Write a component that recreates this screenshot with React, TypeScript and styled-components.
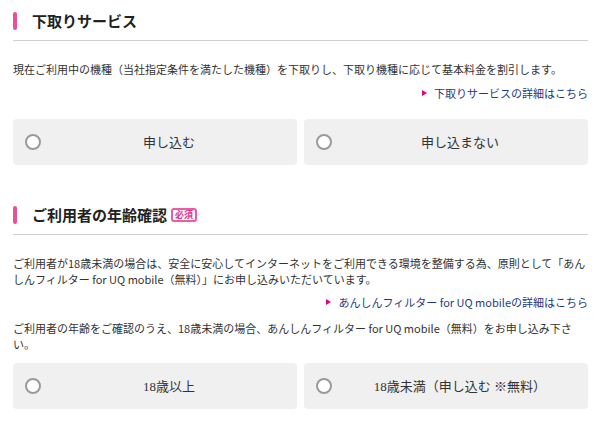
import React from 'react'
import styled, { createGlobalStyle } from 'styled-components'

const GlobalStyle = createGlobalStyle`
  html, body {
    margin: 0;
    padding: 0;
    background: #fff;
  }
  body {
    font-family: "Noto Sans CJK JP", "Noto Sans", sans-serif;
    color: #333;
  }
`

const Page = styled.div`
  width: 575px;
  padding: 12px 12px 0 13px;
`

const Section = styled.section<{ $gap?: number }>`
  margin-bottom: ${(p) => p.$gap ?? 0}px;
`

const Heading = styled.h2`
  display: flex;
  align-items: center;
  margin: 0;
  padding-bottom: 10px;
  border-bottom: 1px solid #cfcfcf;
  font-size: 15px;
  line-height: 18px;
  font-weight: 700;
  color: #222;
`

const Bar = styled.span`
  width: 4px;
  height: 18px;
  border-radius: 2px;
  background: #ec4f97;
  margin-right: 15px;
`

const Badge = styled.span`
  display: inline-flex;
  align-items: center;
  justify-content: center;
  width: 22px;
  height: 10px;
  margin-left: 4px;
  border: 2px solid #ec5c9f;
  border-radius: 3px;
  color: #e6338a;
  font-size: 9px;
  line-height: 1;
  font-weight: 700;
`

const Text = styled.p<{ $top: number }>`
  margin: ${(p) => p.$top}px 0 0;
  font-size: 11px;
  line-height: 16.5px;
  color: #333;
`

const LinkRow = styled.div<{ $top: number }>`
  display: flex;
  justify-content: flex-end;
  align-items: center;
  margin-top: ${(p) => p.$top}px;
  font-size: 11px;
  line-height: 17px;
`

const Link = styled.a`
  display: flex;
  align-items: center;
  color: #1e3a80;
  text-decoration: none;
`

const Arrow = styled.span`
  width: 0;
  height: 0;
  border-top: 3.5px solid transparent;
  border-bottom: 3.5px solid transparent;
  border-left: 5px solid #e4007f;
  margin-right: 7px;
`

const Choices = styled.div<{ $top: number }>`
  display: grid;
  grid-template-columns: 1fr 1fr;
  gap: 7px;
  margin-top: ${(p) => p.$top}px;
`

const Choice = styled.label`
  position: relative;
  display: flex;
  align-items: center;
  justify-content: center;
  height: 46px;
  padding-left: 28px;
  border-radius: 4px;
  background: #f0f0f0;
  cursor: pointer;
  font-family: "Liberation Serif", "Noto Sans CJK JP", serif;
  font-size: 13px;
  color: #333;
`

const Radio = styled.span`
  position: absolute;
  left: 12px;
  top: 50%;
  width: 12px;
  height: 12px;
  margin-top: -8px;
  border: 2px solid #9a9a9a;
  border-radius: 50%;
  background: #fff;
`

const Option = ({ label }: { label: string }) => (
  <Choice>
    <Radio />
    {label}
  </Choice>
)

export default function App() {
  return (
    <>
      <GlobalStyle />
      <Page>
        <Section $gap={41}>
          <Heading>
            <Bar />
            下取りサービス
          </Heading>
          <Text $top={20}>
            現在ご利用中の機種（当社指定条件を満たした機種）を下取りし、下取り機種に応じて基本料金を割引します。
          </Text>
          <LinkRow $top={7}>
            <Link href="#">
              <Arrow />
              下取りサービスの詳細はこちら
            </Link>
          </LinkRow>
          <Choices $top={17}>
            <Option label="申し込む" />
            <Option label="申し込まない" />
          </Choices>
        </Section>

        <Section>
          <Heading>
            <Bar />
            ご利用者の年齢確認
            <Badge>必須</Badge>
          </Heading>
          <Text $top={20}>
            ご利用者が18歳未満の場合は、安全に安心してインターネットをご利用できる環境を整備する為、原則として「あんしんフィルター for UQ mobile（無料）」にお申し込みいただいています。
          </Text>
          <LinkRow $top={6}>
            <Link href="#">
              <Arrow />
              あんしんフィルター for UQ mobileの詳細はこちら
            </Link>
          </LinkRow>
          <Text $top={9}>
            ご利用者の年齢をご確認のうえ、18歳未満の場合、あんしんフィルター for UQ mobile（無料）をお申し込み下さい。
          </Text>
          <Choices $top={10}>
            <Option label="18歳以上" />
            <Option label="18歳未満（申し込む ※無料）" />
          </Choices>
        </Section>
      </Page>
    </>
  )
}
